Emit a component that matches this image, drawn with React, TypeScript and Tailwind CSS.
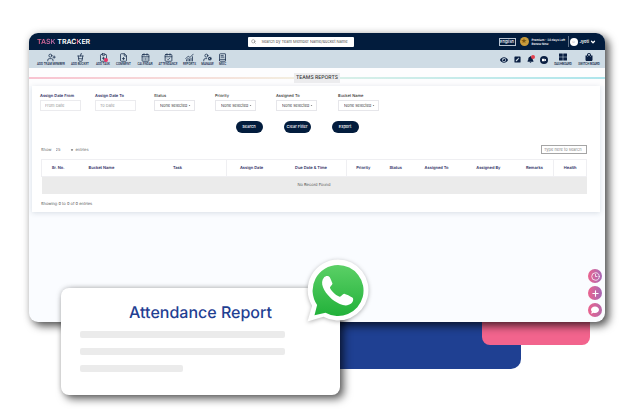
import React from "react";
import {
  UserPlus, CupSoda, ClipboardPlus, FilePlus, CalendarDays, CalendarCheck, ChartNoAxesCombined,
  UserCog, BookText, Search, ChevronDown, Clock3, Plus,
} from "lucide-react";
import { FaEye, FaBell, FaVideo, FaThLarge, FaShoppingBag, FaCaretDown, FaComment, FaPenSquare } from "react-icons/fa";

const tools = [
  { label: "ADD TEAM MEMBER", Icon: UserPlus, width: "w-[28px]" },
  { label: "ADD BUCKET", Icon: CupSoda, width: "w-[22px]" },
  { label: "ADD TASK", Icon: ClipboardPlus, width: "w-[16px]" },
  { label: "COMMENT", Icon: FilePlus, width: "w-[17px]" },
  { label: "CALENDAR", Icon: CalendarDays, width: "w-[18px]" },
  { label: "ATTENDANCE", Icon: CalendarCheck, width: "w-[20px]" },
  { label: "REPORTS", Icon: ChartNoAxesCombined, width: "w-[15px]" },
  { label: "MANAGE", Icon: UserCog, width: "w-[13px]" },
  { label: "MISC", Icon: BookText, width: "w-[9px]" },
];

const columns = [
  { name: "Sr. No.", width: "w-[6%]" },
  { name: "Bucket Name", width: "w-[10%]" },
  { name: "Task", width: "w-[18%]" },
  { name: "Assign Date", width: "w-[9%]" },
  { name: "Due Date & Time", width: "w-[13%]" },
  { name: "Priority", width: "w-[6%]" },
  { name: "Status", width: "w-[6%]" },
  { name: "Assigned To", width: "w-[9%]" },
  { name: "Assigned By", width: "w-[10%]" },
  { name: "Remarks", width: "w-[7%]" },
  { name: "Health", width: "w-[6%]" },
];

function TopBar() {
  return (
    <header className="flex h-[17px] items-center bg-[#021c3d] pr-[9px] pl-2 text-white">
      <div className="flex-[21] text-[7px] leading-[8px] font-semibold">
        <span className="bg-linear-to-r from-[#f0648c] to-[#b06cab] bg-clip-text text-transparent">TASK</span> TRAC
        <span className="bg-linear-to-r from-[#f0648c] from-30% to-white to-60% bg-clip-text text-transparent">K</span>ER
      </div>
      <label className="flex h-[10px] w-[106px] items-center gap-[5px] rounded-[1px] bg-white px-[3px]">
        <Search className="size-[5px] shrink-0 text-[#555]" />
        <input
          aria-label="Search"
          placeholder="Search by Team Member Name/Bucket Name"
          className="w-full min-w-0 text-[4px] leading-[6px] text-[#333] placeholder:text-[#555]"
        />
      </label>
      <div className="flex flex-[24] items-center justify-end">
        <button className="h-2 w-[17px] border border-[#b9c3d0] text-[4px] leading-[6px] font-medium">English</button>
        <span className="ml-1 flex size-[9px] items-center justify-center rounded-full bg-[#c89b3c] text-[6px] leading-[8px] text-[#7b5610]">★</span>
        <p className="ml-[3px] w-[36px] text-[3px] leading-[4px] font-semibold whitespace-nowrap">
          Premium - 38 days Left
          <br />
          <a href="#renew">Renew Now</a>
        </p>
        <span className="h-[11px] w-px bg-[#5e7087]" />
        <button className="ml-px flex items-center text-[4px] leading-[6px] font-semibold">
          <span className="mr-[2px] flex size-2 items-center justify-center rounded-full bg-white text-[4px] text-[#99a]">☺</span>
          Jyoti
          <ChevronDown className="ml-px size-[6px]" strokeWidth={5} />
        </button>
      </div>
    </header>
  );
}

function ToolBar() {
  return (
    <nav className="flex h-[18px] items-center justify-between bg-[#cfdce5] pt-px pr-[5px] pl-2 font-[Roboto,sans-serif] text-[#14294a]">
      <div className="flex gap-1">
        {tools.map(({ label, Icon, width }) => (
          <button key={label} className={`flex flex-col items-center ${width}`}>
            <span className="relative">
              <Icon className="size-[9px]" strokeWidth={2} />
              {label === "ADD TASK" && <span className="absolute right-0 bottom-0 size-1 rounded-full bg-[#e8346a]" />}
            </span>
            <span className="text-[3px] leading-[4px] font-medium whitespace-nowrap">{label}</span>
          </button>
        ))}
      </div>
      <div className="flex items-center gap-[6px] text-[#0a1f42]">
        <button aria-label="Preview"><FaEye className="size-2" /></button>
        <button aria-label="Edit"><FaPenSquare className="size-[7px]" /></button>
        <button aria-label="Notifications" className="relative">
          <FaBell className="size-[7px]" />
          <span className="absolute -top-px -right-px size-1 rounded-full bg-[#e2404e]" />
        </button>
        <button aria-label="Video" className="flex size-2 items-center justify-center rounded-full bg-[#0a1f42] text-white">
          <FaVideo className="size-1" />
        </button>
        <button className="flex w-[18px] flex-col items-center gap-px">
          <FaThLarge className="size-2" />
          <span className="text-[3px] leading-[4px] font-medium">DASHBOARD</span>
        </button>
        <button className="flex w-[22px] flex-col items-center gap-px">
          <FaShoppingBag className="size-2" />
          <span className="text-[3px] leading-[4px] font-medium whitespace-nowrap">SWITCH BOARD</span>
        </button>
      </div>
    </nav>
  );
}

function DateField({ id, label, hint }: { id: string; label: string; hint: string }) {
  return (
    <div>
      <label htmlFor={id} className="block text-[4px] leading-[6px] font-semibold whitespace-nowrap text-[#2b2b5e]">{label}</label>
      <input id={id} placeholder={hint} className="mt-px block h-[11px] w-[41px] border border-[#ebebee] px-1 text-[4px] leading-[6px] placeholder:text-[#999]" />
    </div>
  );
}

function SelectField({ id, label }: { id: string; label: string }) {
  return (
    <div>
      <label htmlFor={id} className="block text-[4px] leading-[6px] font-medium whitespace-nowrap text-[#333]">{label}</label>
      <div className="relative mt-px w-[41px]">
        <select id={id} className="block h-[11px] w-full appearance-none border border-[#e6e6ea] bg-white pl-[5px] text-[4px] leading-[6px] text-[#444]">
          <option>None selected</option>
        </select>
        <FaCaretDown className="pointer-events-none absolute top-1 right-1 size-[3px] text-[#444]" />
      </div>
    </div>
  );
}

function ReportPanel() {
  return (
    <section className="mr-[5px] ml-[3px] bg-white pt-[7px] pr-[13px] pb-[5px] pl-[9px] shadow-[0_1px_5px_rgba(40,60,90,0.16)]">
      <form onSubmit={(e) => e.preventDefault()}>
        <div className="-ml-px grid grid-cols-[55fr_59fr_61fr_61fr_62fr_249fr]">
          <DateField id="from" label="Assign Date From" hint="From Date" />
          <DateField id="to" label="Assign Date To" hint="To Date" />
          <SelectField id="status" label="Status" />
          <SelectField id="priority" label="Priority" />
          <SelectField id="assigned" label="Assigned To" />
          <SelectField id="bucket" label="Bucket Name" />
        </div>
        <div className="mt-[10px] flex justify-center gap-[21px] pr-[34px] text-[4px] leading-[6px] font-medium text-white">
          <button className="h-3 w-[27px] rounded-full bg-[#021c3d]">Search</button>
          <button className="h-3 w-[27px] rounded-full bg-[#021c3d] whitespace-nowrap">Clear Filter</button>
          <button className="h-3 w-[27px] rounded-full bg-[#021c3d]">Export</button>
        </div>
      </form>
      <div className="mt-3 flex items-center justify-between text-[4px] leading-[6px] text-[#666]">
        <label className="flex items-center">
          Show
          <span className="relative mr-[2px] ml-1 w-[18px]">
            <select className="block w-full appearance-none bg-transparent">
              <option>25</option>
            </select>
            <FaCaretDown className="pointer-events-none absolute top-px right-0 size-1 text-[#333]" />
          </span>
          entries
        </label>
        <input
          aria-label="Search the table"
          placeholder="Type here to search"
          className="h-[9px] w-[46px] border border-[#a5a5a5] px-[2px] text-[4px] leading-[6px] placeholder:text-[#888]"
        />
      </div>
      <table className="mt-[5px] w-full table-fixed text-center text-[4px] leading-[6px]">
        <thead>
          <tr className="h-[17px] border border-[#efeff2] text-[#2b2b5e]">
            {columns.map((c) => (
              <th key={c.name} className={`border-[#efeff2] font-semibold whitespace-nowrap last:border-l nth-[3]:border-r nth-[5]:border-r ${c.width}`}>
                {c.name}
              </th>
            ))}
          </tr>
        </thead>
        <tbody>
          <tr className="h-[17px] bg-[#ebebeb] text-[#555]">
            <td colSpan={columns.length}>No Record Found</td>
          </tr>
        </tbody>
      </table>
      <p className="mt-[7px] text-[4px] leading-[6px] text-[#555]">Showing 0 to 0 of 0 entries</p>
    </section>
  );
}

function WhatsAppBadge() {
  return (
    <svg viewBox="0 0 64 66" className="absolute -top-[30px] -right-[30px] h-[66px] w-16 drop-shadow-[0_1px_2px_rgba(0,0,0,0.3)]" role="img" aria-label="WhatsApp">
      <defs>
        <linearGradient id="wa" x1="0" y1="0" x2="0" y2="1">
          <stop offset="0" stopColor="#5bd066" />
          <stop offset="1" stopColor="#22b13a" />
        </linearGradient>
      </defs>
      <path d="M32 1.500a30.500 30.500 0 1 1-14.600 57.300L1.500 63.500l4.600-15.800A30.500 30.500 0 0 1 32 1.500z" fill="#fff" />
      <path d="M32 7a25.500 25.500 0 1 1-12.500 47.700L8.500 57.200l2.600-10.200A25.500 25.500 0 0 1 32 7z" fill="url(#wa)" />
      <path d="M18 19.500c1.700-2 4.500-2 5.600-.4.900 1.500 1.800 3.900 2.800 6.200.5 1.200-2.600 3.300-2.400 4.700 1.500 3.300 5.700 7.200 9.600 8.700 1.500.4 3.300-3.400 4.700-3 2.300.6 5.700 2.400 8 3.700 1.800 1.200.7 4.700-1.200 6.200-2.800 2.300-7 2.300-11.300.4C26.400 42.800 20 36.500 17 29.300c-1.500-3.700-1.200-7.200 1-9.800z" fill="#fff" />
    </svg>
  );
}

export default function App() {
  return (
    <main className="relative min-h-screen overflow-hidden bg-white pt-[33px] font-[Inter,sans-serif] [text-rendering:geometricPrecision]">
      <div className="absolute top-[300px] right-[16%] left-[50%] h-[69px] rounded-[10px] bg-[#1f4092]" />
      <div className="absolute top-[300px] right-[30px] h-[45px] w-[108px] rounded-[8px] bg-[#f2648d]" />

      <div className="relative mr-[15px] ml-[29px] min-h-[289px] overflow-hidden rounded-[9px] bg-[#fafcff] shadow-[4px_4px_9px_rgba(0,0,0,0.65),0_0_8px_rgba(0,0,0,0.12)]">
        <TopBar />
        <ToolBar />
        <div className="flex h-[18px] items-center bg-[#fdfdfe] pt-px">
          <span className="h-[2px] flex-1 bg-linear-to-r from-[#f8c3d1] to-[#f3eee0]" />
          <h1 className="bg-[#ececee] px-[2px] text-[5px] leading-[10px] font-medium text-[#333]">TEAMS REPORTS</h1>
          <span className="h-[2px] flex-1 bg-linear-to-r from-[#d8efe8] to-[#aee5ec]" />
        </div>
        <ReportPanel />
        <div className="absolute right-[3px] bottom-[5px] flex flex-col gap-[3px] text-white">
          <button aria-label="Timer" className="flex size-[14px] items-center justify-center rounded-full bg-linear-to-r from-[#ea628e] to-[#a767b5]"><Clock3 className="size-[9px]" /></button>
          <button aria-label="Add" className="flex size-[14px] items-center justify-center rounded-full bg-linear-to-r from-[#ea628e] to-[#a767b5]"><Plus className="size-[9px]" strokeWidth={3} /></button>
          <button aria-label="Chat" className="flex size-[14px] items-center justify-center rounded-full bg-linear-to-r from-[#ea628e] to-[#b868a8]"><FaComment className="size-2" /></button>
        </div>
      </div>

      <article className="relative -mt-[34px] ml-[61px] w-[45%] rounded-[8px] bg-white px-[19px] pt-[13px] pb-[23px] shadow-[4px_4px_9px_rgba(0,0,0,0.6),0_0_5px_rgba(0,0,0,0.2)]">
        <h2 className="text-center text-[16px] leading-[22px] font-medium text-[#1f4092]">Attendance Report</h2>
        <div className="mt-2 flex flex-col gap-[10px] pr-9">
          <div className="h-[7px] rounded-[2px] bg-[#ebebeb]" />
          <div className="h-[7px] rounded-[2px] bg-[#ebebeb]" />
          <div className="h-[7px] w-1/2 rounded-[2px] bg-[#ebebeb]" />
        </div>
        <WhatsAppBadge />
      </article>
    </main>
  );
}
